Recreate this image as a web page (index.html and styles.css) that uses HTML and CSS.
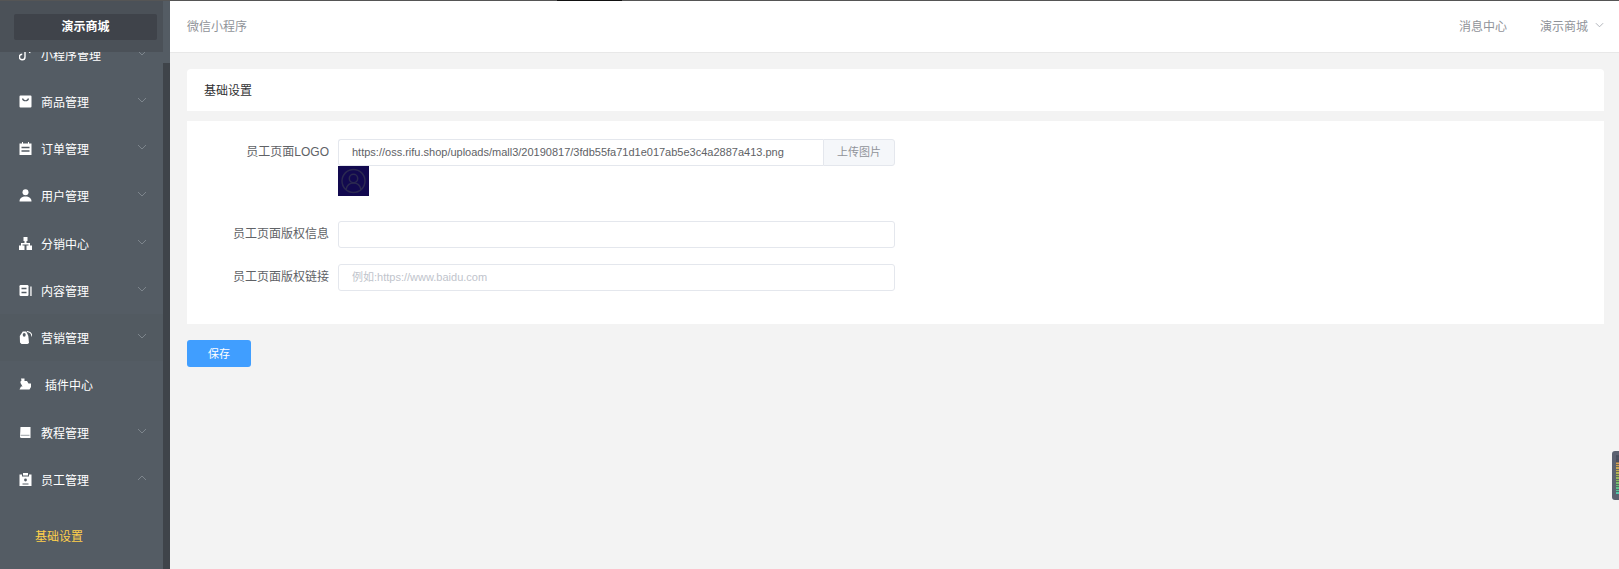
FILE: index.html
```html
<!DOCTYPE html>
<html lang="zh-CN">
<head>
<meta charset="utf-8">
<title>基础设置</title>
<link rel="stylesheet" href="styles.css">
</head>
<body>
<div class="app">
  <aside class="sidebar">
    <div class="side-col">
      <div class="logo-band"><div class="logo-btn">演示商城</div></div>
      <nav class="menu">
        <a class="item first"><svg class="ico" viewBox="0 0 13 13"><path d="M6 1.500v7.500a2.800 2.800 0 1 1-2.800-2.800" fill="none" stroke="#fff" stroke-width="1.400"/><path d="M11.500 2l-1 3" stroke="#fff" stroke-width="1.400"/></svg><span class="lbl">小程序管理</span><svg class="arrow" viewBox="0 0 10 6"><path d="M1 1l4 4 4-4"/></svg></a>
        <a class="item"><svg class="ico" viewBox="0 0 13 13"><path d="M1.500 0.500h10a1 1 0 0 1 1 1v10a1 1 0 0 1-1 1h-10a1 1 0 0 1-1-1v-10a1 1 0 0 1 1-1z" fill="#fff"/><path d="M3.500 3.500c.8 3 5.200 3 6 0" fill="none" stroke="#545c64" stroke-width="1.200"/></svg><span class="lbl">商品管理</span><svg class="arrow" viewBox="0 0 10 6"><path d="M1 1l4 4 4-4"/></svg></a>
        <a class="item"><svg class="ico" viewBox="0 0 13 13"><path d="M0.500 1.500h2.500v-1.500h1v1.500h5v-1.500h1v1.500h2.500v11.500h-12z" fill="#fff"/><path d="M2.500 5.500h8M2.500 9h8" stroke="#545c64" stroke-width="1.300"/></svg><span class="lbl">订单管理</span><svg class="arrow" viewBox="0 0 10 6"><path d="M1 1l4 4 4-4"/></svg></a>
        <a class="item"><svg class="ico" viewBox="0 0 13 13"><circle cx="6.500" cy="3.300" r="3" fill="#fff"/><path d="M0.500 12.500c0-3.500 2.500-5 6-5s6 1.500 6 5z" fill="#fff"/></svg><span class="lbl">用户管理</span><svg class="arrow" viewBox="0 0 10 6"><path d="M1 1l4 4 4-4"/></svg></a>
        <a class="item"><svg class="ico" viewBox="0 0 13 13"><path d="M4.500 0h4v4h-1v2h3.500v2.500h2v4.500h-5.500v-4.500h2v-1h-6v1h2v4.500h-5.500v-4.500h2v-2.500h3.500v-2h-1z" fill="#fff"/></svg><span class="lbl">分销中心</span><svg class="arrow" viewBox="0 0 10 6"><path d="M1 1l4 4 4-4"/></svg></a>
        <a class="item"><svg class="ico" viewBox="0 0 13 13"><rect x="0.500" y="1" width="9" height="11" rx="1.200" fill="#fff"/><path d="M2.500 4.500h5M2.500 8.500h5" stroke="#545c64" stroke-width="1.300"/><rect x="11.300" y="2.500" width="1.300" height="9.500" fill="#fff"/></svg><span class="lbl">内容管理</span><svg class="arrow" viewBox="0 0 10 6"><path d="M1 1l4 4 4-4"/></svg></a>
        <a class="item hovered"><svg class="ico" viewBox="0 0 13 13"><path d="M0.800 5l3-4.500h3.500l2 4.500 .7 7-1.500 1h-6l-1.500-1.500z" fill="#fff"/><ellipse cx="5.200" cy="3.800" rx="1.500" ry="1.900" fill="#545c64"/><path d="M8 .5c2.800.3 4.800 2.300 5 5" fill="none" stroke="#fff" stroke-width="1.100"/></svg><span class="lbl">营销管理</span><svg class="arrow" viewBox="0 0 10 6"><path d="M1 1l4 4 4-4"/></svg></a>
        <a class="item"><svg class="ico" viewBox="0 0 13 13"><path d="M2 0.500h3.500v2.500h2.500l1.500 2.500h2.500v3.500l-1.500 2.500h-10l1.500-3h1.500l-2-3.500v-1.500l1-1z" fill="#fff"/></svg><span class="lbl lbl-plugin">插件中心</span></a>
        <a class="item"><svg class="ico" viewBox="0 0 13 13"><path d="M1.500 1h10v11h-9a1.500 1.500 0 0 1-1.500-1.500z" fill="#fff"/><path d="M1.500 9.300h9" stroke="#9aa0a6" stroke-width="1"/></svg><span class="lbl">教程管理</span><svg class="arrow" viewBox="0 0 10 6"><path d="M1 1l4 4 4-4"/></svg></a>
        <a class="item"><svg class="ico" viewBox="0 0 13 13"><path d="M0.500 1.500h2.500v2h7v-2h2.500v11.500h-12z" fill="#fff"/><rect x="4" y="0" width="5" height="2.500" fill="#fff"/><circle cx="6.500" cy="7" r="1.400" fill="#545c64"/><path d="M3.500 11h6" stroke="#545c64" stroke-width="1"/></svg><span class="lbl">员工管理</span><svg class="arrow" viewBox="0 0 10 6"><path d="M1 5l4-4 4 4"/></svg></a>
        <a class="subitem">基础设置</a>
      </nav>
    </div>
    <div class="side-scroll"><div class="thumb"></div></div>
  </aside>
  <div class="main">
    <header class="topbar">
      <span class="crumb">微信小程序</span>
      <div class="top-right">
        <span>消息中心</span>
        <span class="shop">演示商城<svg class="top-arrow" viewBox="0 0 10 6"><path d="M1 1l4 4 4-4"/></svg></span>
      </div>
    </header>
    <div class="content">
      <div class="card-title">基础设置</div>
      <form class="card-form">
        <div class="row row-logo">
          <label class="label">员工页面LOGO</label>
          <div class="field">
            <div class="group">
              <input class="input joined" value="https://oss.rifu.shop/uploads/mall3/20190817/3fdb55fa71d1e017ab5e3c4a2887a413.png">
              <span class="append">上传图片</span>
            </div>
            <div class="thumb-img">
              <svg viewBox="0 0 31 31" width="31" height="31"><circle cx="15.500" cy="15" r="11.500" fill="none" stroke="#2b2950" stroke-width="1.500"/><circle cx="15.500" cy="12.500" r="4.200" fill="none" stroke="#2b2950" stroke-width="1.500"/><path d="M8 23.500c1-4.500 4-6.500 7.500-6.500s6.500 2 7.500 6.500" fill="none" stroke="#2b2950" stroke-width="1.500"/></svg>
            </div>
          </div>
        </div>
        <div class="row row-copy">
          <label class="label">员工页面版权信息</label>
          <div class="field"><input class="input"></div>
        </div>
        <div class="row">
          <label class="label">员工页面版权链接</label>
          <div class="field"><input class="input" placeholder="例如:https://www.baidu.com"></div>
        </div>
      </form>
      <button class="save" type="button">保存</button>
    </div>
  </div>
  <div class="widget"><div class="widget-strip"></div></div>
</div>
</body>
</html>
```
FILE: styles.css
```css
* { box-sizing: border-box; }
html, body { margin: 0; height: 100%; overflow: hidden; }
body {
  font-family: "Liberation Sans", "Noto Sans CJK SC", sans-serif;
  font-size: 12px;
  background: #f3f3f3;
}
.app { display: flex; height: 569px; position: relative; }
.app::before {
  content: "";
  position: absolute;
  left: 0; right: 0; top: 0;
  height: 1px;
  background: linear-gradient(90deg, #555 0, #555 557px, #111 557px, #111 622px, #555 622px);
  z-index: 3;
}

/* sidebar */
.sidebar { width: 170px; flex: none; display: flex; background: #545c64; }
.side-col { width: 163px; flex: none; display: flex; flex-direction: column; height: 569px; overflow: hidden; }
.logo-band { height: 52px; flex: none; background: #4b5158; padding: 14px 6px 12px 14px; }
.logo-btn {
  height: 26px; line-height: 26px; text-align: center;
  width: 143px;
  background: #3f434a; border-radius: 2px;
  color: #fff; font-weight: bold; font-size: 12px;
}
.menu { flex: 1; min-height: 0; overflow: hidden; }
.item {
  display: flex; align-items: center;
  height: 47.25px;
  padding: 0 16px 0 19px;
  color: #fff;
}
.item.first { margin-top: -20px; height: 45.8px; }
.item.hovered { background: #525a61; }
.ico { width: 13px; height: 13px; flex: none; margin-right: 9px; }
.lbl { flex: 1; }
.lbl-plugin { padding-left: 4px; }
.arrow { width: 10px; height: 6px; flex: none; margin-top: -3px; fill: none; stroke: #7d858c; stroke-width: 1; }
.subitem {
  display: block;
  margin-top: 26px;
  padding-left: 35px;
  line-height: 16px;
  color: #ffd04b;
}
.side-scroll { width: 7px; flex: none; background: #545c64; padding-top: 63px; }
.thumb { height: 100%; background: #3f444a; }

/* main */
.main { flex: 1; min-width: 0; display: flex; flex-direction: column; }
.topbar {
  height: 53px; flex: none;
  background: #fff;
  border-bottom: 1px solid #e8e8e8;
  display: flex; align-items: center; justify-content: space-between;
  padding: 0 15px 2px 17px;
  color: #909399;
}
.top-right { display: flex; align-items: center; gap: 33px; }
.shop { display: flex; align-items: center; }
.top-arrow { width: 9px; height: 6px; margin-left: 7px; fill: none; stroke: #a8abb2; stroke-width: 1; }
.content { padding: 16px 15px 0 17px; }
.card-title {
  height: 42px; line-height: 44px;
  background: #fff;
  border-radius: 4px 4px 0 0;
  padding-left: 17px;
  color: #303133;
}
.card-form {
  margin-top: 10px;
  height: 203px;
  background: #fff;
  padding-top: 18px;
}
.row { display: flex; margin-bottom: 16px; }
.row-logo { margin-bottom: 25px; }
.label {
  width: 142px; flex: none;
  text-align: right;
  line-height: 26px;
  color: #606266;
}
.field { width: 557px; margin-left: 9px; }
.group { display: flex; height: 27px; }
.input {
  display: block;
  width: 100%; height: 27px;
  border: 1px solid #e4e7ed;
  border-radius: 3px;
  padding: 0 13px 1px;
  font: 11px "Liberation Sans", "Noto Sans CJK SC", sans-serif;
  color: #606266;
  background: #fff;
  outline: none;
}
.input::placeholder { color: #c0c4cc; opacity: 1; }
.input.joined { flex: 1; min-width: 0; border-right: 0; border-radius: 3px 0 0 3px; }
.append {
  width: 72px; flex: none;
  font-size: 11px;
  line-height: 25px; text-align: center;
  background: #f5f7fa;
  border: 1px solid #e4e7ed;
  border-radius: 0 3px 3px 0;
  color: #909399;
}
.thumb-img { width: 31px; height: 30px; background: #12094f; overflow: hidden; }
.thumb-img svg { display: block; }
.save {
  display: block;
  margin-top: 16px;
  width: 64px; height: 27px;
  border: 0; border-radius: 3px;
  background: #409eff;
  color: #fff;
  font: 11px "Liberation Sans", "Noto Sans CJK SC", sans-serif;
  padding: 0 0 2px;
}

/* floating widget at the right edge */
.widget {
  position: absolute;
  right: 0; top: 451px;
  width: 7px; height: 49px;
  border-radius: 3px 0 0 3px;
  background: #5b6170;
  padding: 4px 0 6px 4px;
}
.widget-strip {
  height: 39px;
  background:
    repeating-linear-gradient(180deg, transparent 0 1.500px, rgba(70,76,90,.7) 1.500px 2.500px),
    linear-gradient(180deg, #4a5060 0, #4a5060 7px, #d8a050 8px, #c0b050 16px, #90b858 24px, #60c080 32px, #50c8b0 39px);
}
```
